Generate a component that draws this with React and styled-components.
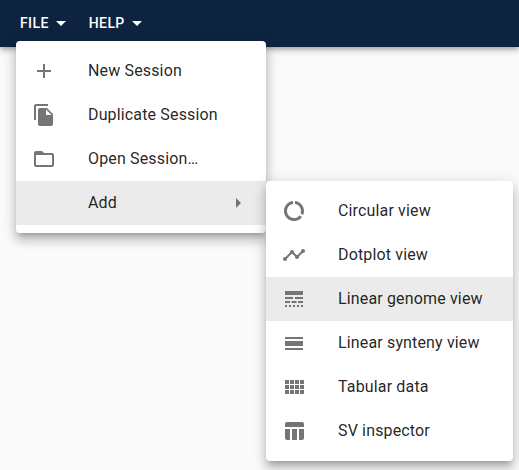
import React from "react";
import styled, { createGlobalStyle } from "styled-components";

const Global = createGlobalStyle`
  * { box-sizing: border-box; }
  body { margin: 0; background: #fafafa; font-family: Roboto, sans-serif; color: rgba(0,0,0,.87); overflow: hidden; }
`;
const Page = styled.div`height: 470px; position: relative; overflow: hidden;`;
const Bar = styled.header`
  height: 47px; background: #0d233f; display: flex; align-items: center; padding: 0 12px 1px;
  box-shadow: 0 2px 4px -1px rgba(0,0,0,.2), 0 4px 5px rgba(0,0,0,.14), 0 1px 10px rgba(0,0,0,.12);
`;
const BarButton = styled.button`
  height: 36px; border: 0; background: none; color: #fff; display: flex; align-items: center;
  padding: 0 8px; margin-right: 4px; font: 500 14px/24px Roboto, sans-serif; letter-spacing: .4px;
`;
const Caret = styled.svg`width: 24px; height: 24px; margin-right: -4px; fill: currentColor;`;
const Menu = styled.ul`
  position: absolute; left: ${p => p.$x}px; top: ${p => p.$y}px; width: ${p => p.$w}px;
  margin: 0; padding: 8px 0; list-style: none; background: #fff; border-radius: 4px;
  box-shadow: 0 5px 5px -3px rgba(0,0,0,.2), 0 8px 10px 1px rgba(0,0,0,.14), 0 3px 14px 2px rgba(0,0,0,.12);
`;
const Item = styled.li`
  height: 44px; display: flex; align-items: center; padding: 0 16px;
  background: ${p => (p.$active ? "#ebebeb" : "transparent")};
  font-size: 16px; line-height: 24px; letter-spacing: .15px; white-space: nowrap;
`;
const IconSlot = styled.span`width: 56px; flex: none; display: flex;`;
const Label = styled.span`flex: 1;`;
const Icon = styled.svg`width: 24px; height: 24px; flex: none; fill: #757575;`;

const paths = {
  add: "M19 13h-6v6h-2v-6H5v-2h6V5h2v6h6v2z",
  copy: "M16 1H4c-1.100 0-2 .9-2 2v14h2V3h12V1zm-1 4l6 6v10c0 1.100-.9 2-2 2H7.990C6.890 23 6 22.100 6 21l.01-14c0-1.100.89-2 1.990-2h7zm-1 7h5.500L14 6.500V12z",
  folder: "M20 6h-8l-2-2H4c-1.100 0-1.990.9-1.990 2L2 18c0 1.100.9 2 2 2h16c1.100 0 2-.9 2-2V8c0-1.100-.9-2-2-2zm0 12H4V8h16v10z",
  right: "M10 17l5-5-5-5v10z",
  circular: "M13 2.050v3.030c3.390.49 6 3.390 6 6.920 0 .9-.18 1.750-.48 2.540l2.600 1.530c.56-1.240.88-2.620.88-4.070 0-5.180-3.950-9.450-9-9.950zM12 19c-3.870 0-7-3.130-7-7 0-3.530 2.610-6.430 6-6.920V2.050c-5.060.5-9 4.760-9 9.950 0 5.520 4.470 10 9.990 10 3.310 0 6.240-1.610 8.060-4.090l-2.600-1.530C16.170 17.980 14.210 19 12 19z",
  dotplot: "M23 8c0 1.100-.9 2-2 2-.18 0-.35-.02-.51-.07l-3.560 3.550c.05.16.07.34.07.52 0 1.100-.9 2-2 2s-2-.9-2-2c0-.18.02-.36.07-.52l-2.550-2.550c-.16.05-.34.07-.52.07s-.36-.02-.52-.07l-4.550 4.560c.05.16.07.33.07.51 0 1.100-.9 2-2 2s-2-.9-2-2 .9-2 2-2c.18 0 .35.02.51.07l4.560-4.550C8.020 9.360 8 9.180 8 9c0-1.100.9-2 2-2s2 .9 2 2c0 .18-.02.36-.07.52l2.550 2.550c.16-.05.34-.07.52-.07s.36.02.52.07l3.550-3.560C19.020 8.350 19 8.180 19 8c0-1.100.9-2 2-2s2 .9 2 2z",
  linear: "M3 16h5v-2H3v2zm6.500 0h5v-2h-5v2zm6.500 0h5v-2h-5v2zM3 20h2v-2H3v2zm4 0h2v-2H7v2zm4 0h2v-2h-2v2zm4 0h2v-2h-2v2zm4 0h2v-2h-2v2zM3 12h8v-2H3v2zm10 0h8v-2h-8v2zM3 4v4h18V4H3z",
  synteny: "M3 17h18v2H3zM3 10h18v5H3zM3 6h18v2H3z",
  tabular: "M3 9h4V5H3v4zm0 5h4v-4H3v4zm5 0h4v-4H8v4zm5 0h4v-4h-4v4zM8 9h4V5H8v4zm5-4v4h4V5h-4zm5 9h4v-4h-4v4zM3 19h4v-4H3v4zm5 0h4v-4H8v4zm5 0h4v-4h-4v4zm5 0h4v-4h-4v4zm0-14v4h4V5h-4z",
  sv: "M10 10.020h5V21h-5zM17 21h3c1.100 0 2-.9 2-2v-9h-5v11zm3-18H5c-1.100 0-2 .9-2 2v3h19V5c0-1.100-.9-2-2-2zM3 19c0 1.100.9 2 2 2h3V10H3v9z",
};
const Glyph = ({ name }) => <Icon viewBox="0 0 24 24"><path d={paths[name]} /></Icon>;
const MenuItem = ({ icon, label, active, submenu }) => (
  <Item $active={active}>
    <IconSlot>{icon && <Glyph name={icon} />}</IconSlot>
    <Label>{label}</Label>
    {submenu && <Glyph name="right" />}
  </Item>
);
const views = [
  ["circular", "Circular view"], ["dotplot", "Dotplot view"], ["linear", "Linear genome view"],
  ["synteny", "Linear synteny view"], ["tabular", "Tabular data"], ["sv", "SV inspector"],
];

export default function App() {
  return (
    <Page>
      <Global />
      <Bar>
        {["FILE", "HELP"].map(t => (
          <BarButton key={t}>{t}<Caret viewBox="0 0 24 24"><path d="M7 10l5 5 5-5z" /></Caret></BarButton>
        ))}
      </Bar>
      <Menu $x={16} $y={41} $w={250}>
        <MenuItem icon="add" label="New Session" />
        <MenuItem icon="copy" label="Duplicate Session" />
        <MenuItem icon="folder" label="Open Session…" />
        <MenuItem label="Add" active submenu />
      </Menu>
      <Menu $x={266} $y={181} $w={247}>
        {views.map(([icon, label]) => (
          <MenuItem key={icon} icon={icon} label={label} active={icon === "linear"} />
        ))}
      </Menu>
    </Page>
  );
}
